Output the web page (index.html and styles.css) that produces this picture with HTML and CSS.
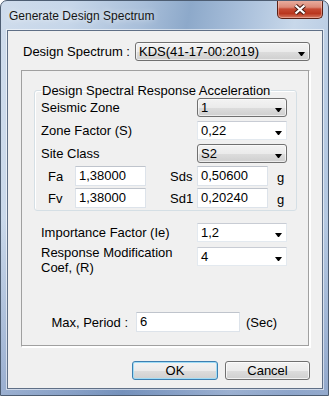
FILE: index.html
```html
<!DOCTYPE html>
<html lang="en">
<head>
  <meta charset="UTF-8" />
  <meta name="viewport" content="width=device-width, initial-scale=1.0" />
  <title>Generate Design Spectrum</title>
  <link rel="stylesheet" href="styles.css">
</head>
<body>

  <div class="window">
    <div class="titlebar">
      <span class="title">Generate Design Spectrum</span>
      <button class="close" title="Close">
        <svg width="14" height="11" viewBox="0 0 14 11">
          <path d="M2.5 1.5 L11.5 9.5 M11.5 1.5 L2.5 9.5" stroke="#4a1f17" stroke-width="4.2" />
          <path d="M2.5 1.5 L11.5 9.5 M11.5 1.5 L2.5 9.5" stroke="#ffffff" stroke-width="2.2" />
        </svg>
      </button>
    </div>

    <div class="client">
      <div class="spectrum-row">
        <span class="spectrum-label">Design Spectrum :</span>
        <div class="combo list spectrum">KDS(41-17-00:2019)</div>
      </div>

      <div class="outer-group">
        <fieldset class="group">
          <legend>Design Spectral Response Acceleration</legend>
          <div class="row">
            <span>Seismic Zone</span>
            <div class="combo list">1</div>
          </div>
          <div class="row">
            <span>Zone Factor (S)</span>
            <div class="combo edit">0,22</div>
          </div>
          <div class="row">
            <span>Site Class</span>
            <div class="combo list">S2</div>
          </div>
          <div class="coef-row first">
            <span class="coef-name">Fa</span>
            <div class="field">1,38000</div>
            <span class="s-name">Sds</span>
            <div class="field">0,50600</div>
            <span class="unit">g</span>
          </div>
          <div class="coef-row">
            <span class="coef-name">Fv</span>
            <div class="field">1,38000</div>
            <span class="s-name">Sd1</span>
            <div class="field">0,20240</div>
            <span class="unit">g</span>
          </div>
        </fieldset>

        <div class="row lower importance">
          <span>Importance Factor (Ie)</span>
          <div class="combo edit">1,2</div>
        </div>
        <div class="row lower response">
          <span class="two-line">Response Modification<br>Coef, (R)</span>
          <div class="combo edit">4</div>
        </div>

        <div class="period-row">
          <span class="period-label">Max, Period :</span>
          <div class="field period">6</div>
          <span class="sec">(Sec)</span>
        </div>
      </div>

      <div class="buttons">
        <button class="btn default">OK</button>
        <button class="btn cancel">Cancel</button>
      </div>
    </div>
  </div>

</body>
</html>
```

FILE: styles.css
```css
body {
  margin: 0;
  font-family: "Liberation Sans", Arial, sans-serif;
  font-size: 13px;
  color: #000;
  background: #fff;
}

.window {
  width: 329px;
  height: 396px;
  box-sizing: border-box;
  border: 1px solid #4d5d72;
  border-radius: 7px 7px 0 0;
  overflow: hidden;
  background:
    linear-gradient(to bottom, rgba(0,0,0,0) 55%, rgba(70,100,160,0.35) 100%),
    linear-gradient(100deg, #cfdcec 0%, #c6d6e9 18%, #a9bfda 36%, #8da9ca 48%, #a6bdd9 60%, #c8d8ea 75%, #b4c8e1 90%, #bccee4 100%);
  display: flex;
  flex-direction: column;
}

.titlebar {
  height: 29px;
  display: flex;
  justify-content: space-between;
  align-items: flex-start;
}

.title {
  font-size: 12px;
  padding: 8px 0 0 8px;
  color: #151515;
  text-shadow: 0 0 6px rgba(255,255,255,0.9);
}

.close {
  width: 46px;
  height: 19px;
  margin: -1px 5px 0 0;
  padding: 0;
  border: 1px solid #5a2015;
  border-top: none;
  border-radius: 0 0 5px 5px;
  background: linear-gradient(to bottom, #eab1a3 0%, #dc8a77 40%, #c64a33 50%, #b9361e 75%, #d57a62 100%);
  box-shadow: inset 0 0 0 1px rgba(255,210,200,0.45);
  display: flex;
  align-items: center;
  justify-content: center;
}

.client {
  margin-left: 6px;
  width: 316px;
  height: 359px;
  box-sizing: border-box;
  border: 1px solid #5f6f86;
  box-shadow: 0 0 0 1px rgba(255,255,255,0.55);
  background: #f0f0f0;
  padding: 11px 12px 0 13px;
}

.spectrum-row {
  display: flex;
  align-items: center;
  height: 19px;
}

.spectrum-label {
  width: 114px;
  padding-left: 2px;
  box-sizing: border-box;
}

.combo {
  position: relative;
  height: 19px;
  box-sizing: border-box;
  line-height: 17px;
  padding-left: 3px;
}

.combo::after {
  content: "";
  position: absolute;
  right: 4px;
  top: 9px;
  width: 1px;
  border-top: 4px solid #000;
  border-left: 3px solid transparent;
  border-right: 3px solid transparent;
}

.combo.list {
  border: 1px solid #707070;
  border-radius: 3px;
  background: linear-gradient(to bottom, #f3f3f3 0%, #ebebeb 50%, #dddddd 51%, #cfcfcf 100%);
  box-shadow: inset 0 0 0 1px rgba(255,255,255,0.6);
}

.combo.edit {
  border: 1px solid #e3e9ef;
  border-top-color: #c8ccd4;
  background: #fff;
}

.spectrum {
  width: 175px;
}

.outer-group {
  margin-top: 9px;
  height: 277px;
  box-sizing: border-box;
  border: 1px solid #a0a0a0;
  border-right-color: #ffffff;
  border-bottom-color: #ffffff;
  box-shadow: inset -1px -1px 0 #a0a0a0, 1px 1px 0 #fff;
  padding: 12px 12px 0 12px;
}

.group {
  margin: 0;
  padding: 0 8px 2px 6px;
  border: 1px solid #d5dfe5;
  border-radius: 3px;
  box-shadow: inset 1px 1px 0 #fff;
}

.group legend {
  padding: 0 1px;
  line-height: 15px;
}

.row {
  display: grid;
  grid-template-columns: 156px 90px;
  align-items: center;
  height: 19px;
  margin-top: 4px;
}

.group .row:first-of-type {
  margin-top: 0;
}

.coef-row {
  display: grid;
  grid-template-columns: 34px 71px 51px 71px auto;
  align-items: center;
  height: 20px;
  margin-top: 2px;
}

.coef-row.first {
  margin-top: 3px;
}

.coef-name {
  padding-left: 7px;
}

.s-name {
  padding-left: 24px;
}

.unit {
  padding: 3px 0 0 9px;
}

.field {
  height: 20px;
  box-sizing: border-box;
  border: 1px solid #dde3ea;
  border-top-color: #bfc4cc;
  background: #fff;
  line-height: 18px;
  padding-left: 3px;
}

.row.lower {
  padding-left: 7px;
}

.importance {
  margin-top: 12px;
}

.response {
  margin-top: 5px;
  align-items: start;
}

.two-line {
  line-height: 15px;
  margin-top: -2px;
}

.period-row {
  display: flex;
  align-items: center;
  margin-top: 46px;
}

.period-label {
  width: 102px;
  padding-right: 8px;
  box-sizing: border-box;
  text-align: right;
}

.field.period {
  width: 104px;
}

.sec {
  margin-left: 6px;
}

.buttons {
  display: flex;
  justify-content: flex-end;
  gap: 7px;
  margin-top: 14px;
}

.btn {
  height: 19px;
  padding: 0;
  font-family: "Liberation Sans", Arial, sans-serif;
  font-size: 13px;
  color: #000;
  border: 1px solid #707070;
  border-radius: 3px;
  background: linear-gradient(to bottom, #f3f3f3 0%, #ebebeb 50%, #dddddd 51%, #cfcfcf 100%);
  box-shadow: inset 0 0 0 1px rgba(255,255,255,0.7);
}

.btn.default {
  width: 86px;
  border-color: #3c7fb1;
  box-shadow: inset 0 0 0 1px #9fdcf6;
}

.btn.cancel {
  width: 85px;
}
```
